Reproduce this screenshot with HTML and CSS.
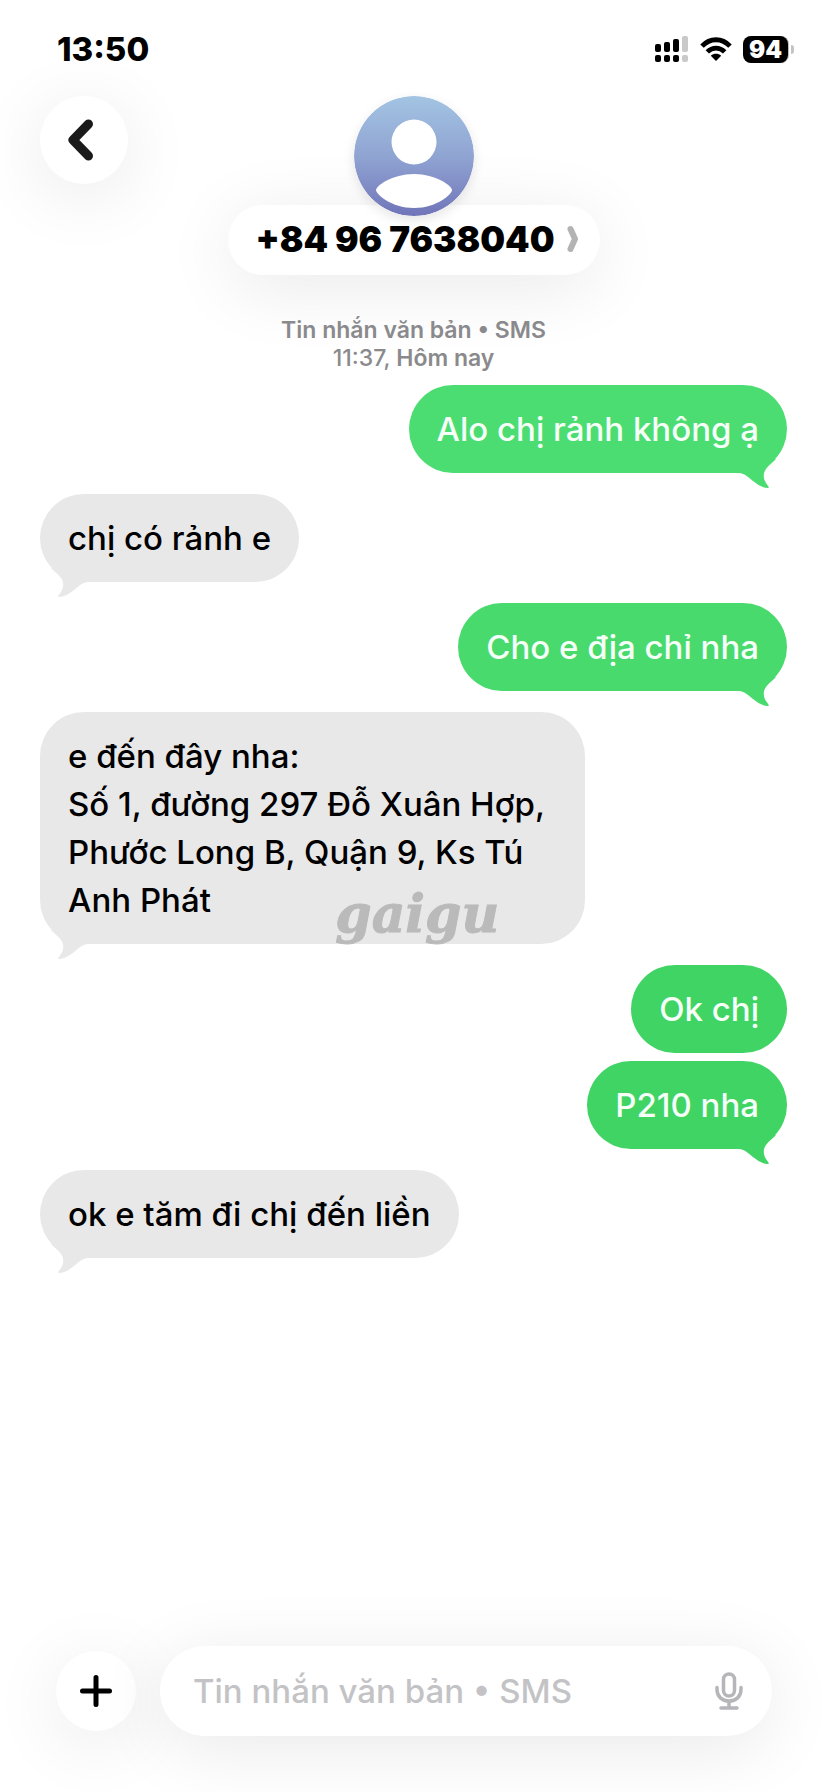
FILE: index.html
```html
<!DOCTYPE html>
<html lang="vi">
<head>
<meta charset="utf-8">
<meta name="viewport" content="width=device-width, initial-scale=1">
<title>Tin nhắn</title>
<link rel="stylesheet" href="styles.css">
</head>
<body>
<svg class="defs" width="0" height="0" aria-hidden="true">
  <symbol id="tail" viewBox="0 0 48 32">
    <path d="M0 16C5 16 9 20 14 24C19 28 24 31 29 31C31 31 29 29 27 26C24 21 24 16 27 12C30 8 33 6 37 2L20 0L0 10Z"/>
  </symbol>
</svg>
<div class="phone">
  <div class="status">
    <time class="clock">13:50</time>
    <div class="indicators">
      <svg width="34" height="28" viewBox="0 0 34 28" aria-hidden="true">
        <g fill="#000">
          <rect x="0" y="9" width="6" height="8" rx="2"/><rect x="9" y="7" width="6" height="10" rx="2"/><rect x="18" y="4" width="6" height="13" rx="2"/>
          <rect x="0" y="20" width="6" height="7" rx="2"/><rect x="9" y="20" width="6" height="7" rx="2"/><rect x="18" y="20" width="6" height="7" rx="2"/>
        </g>
        <g fill="#c9c9c9"><rect x="27" y="1" width="6" height="16" rx="2"/><rect x="27" y="20" width="6" height="7" rx="2"/></g>
      </svg>
      <svg width="32" height="26" viewBox="0 0 32 26" aria-hidden="true">
        <g fill="none" stroke="#000" stroke-width="4.800">
          <path d="M2 10.200C10 1.600 22 1.600 30 10.200"/><path d="M7.300 15.900C12.400 10.800 19.600 10.800 24.700 15.900"/>
        </g>
        <path d="M10.800 19.800C13.800 17.200 18.200 17.200 21.200 19.800L16 25Z"/>
      </svg>
      <div class="battery"><span class="level">94</span><span class="cap"></span></div>
    </div>
  </div>

  <header class="top">
    <button class="back" type="button" aria-label="Quay lại">
      <svg width="26" height="42" viewBox="0 0 26 42" aria-hidden="true"><path d="M20.500 5L5 21L20.500 37" fill="none" stroke="#1a1a1a" stroke-width="9" stroke-linecap="round" stroke-linejoin="round"/></svg>
    </button>
    <div class="contact">
      <svg class="avatar" width="120" height="120" viewBox="0 0 120 120" aria-hidden="true">
        <defs><linearGradient id="sky" x1="0" y1="0" x2="0" y2="1"><stop offset="0" stop-color="#a3c4e3"/><stop offset=".5" stop-color="#90a4d2"/><stop offset="1" stop-color="#7075b9"/></linearGradient></defs>
        <circle cx="60" cy="60" r="60" fill="url(#sky)"/>
        <circle cx="60" cy="46" r="22.500" fill="#fff"/>
        <path d="M22 94C22 90 38 78 60 78C82 78 98 90 98 94C98 98 83 112 60 112C37 112 22 98 22 94Z" fill="#fff"/>
      </svg>
      <button class="name" type="button">+84 96 7638040
        <svg width="12" height="28" viewBox="0 0 12 28" aria-hidden="true"><path d="M3.500 4L8 14L3.500 24" fill="none" stroke="#b3b3b3" stroke-width="6" stroke-linecap="round" stroke-linejoin="round"/></svg>
      </button>
    </div>
  </header>

  <main class="thread">
    <p class="meta"><b>Tin nhắn văn bản • SMS</b><br>11:37, <b>Hôm nay</b></p>
    <div class="msg out tone1">Alo chị rảnh không ạ<svg class="tail"><use href="#tail"/></svg></div>
    <div class="msg in">chị có rảnh e<svg class="tail"><use href="#tail"/></svg></div>
    <div class="msg out tone2">Cho e địa chỉ nha<svg class="tail"><use href="#tail"/></svg></div>
    <div class="msg in long">e đến đây nha:<br>Số 1, đường 297 Đỗ Xuân Hợp, Phước Long B, Quận 9, Ks Tú Anh Phát<svg class="tail"><use href="#tail"/></svg><span class="mark">gaigu</span></div>
    <div class="msg out tone3">Ok chị</div>
    <div class="msg out tone3 joined">P210 nha<svg class="tail"><use href="#tail"/></svg></div>
    <div class="msg in">ok e tăm đi chị đến liền<svg class="tail"><use href="#tail"/></svg></div>
  </main>

  <form class="composer">
    <button class="add" type="button" aria-label="Thêm">
      <svg width="32" height="32" viewBox="0 0 32 32" aria-hidden="true"><path d="M16 2.500V29.500M2.500 16H29.500" stroke="#000" stroke-width="5" stroke-linecap="round"/></svg>
    </button>
    <div class="field">
      <input class="text" type="text" aria-label="Tin nhắn" placeholder="Tin nhắn văn bản • SMS">
      <button class="mic" type="button" aria-label="Ghi âm">
        <svg width="28" height="38" viewBox="0 0 28 38" fill="none" stroke="#b5b5ba" stroke-width="3.500" stroke-linecap="round" aria-hidden="true"><rect x="8.500" y="2" width="11" height="22" rx="5.500"/><path d="M2 15.500V17.500C2 24.500 7 29 14 29S26 24.500 26 17.500V15.500M14 29V35.500M6 36H22"/></svg>
      </button>
    </div>
  </form>
</div>
</body>
</html>
```
FILE: styles.css
```css
* { box-sizing: border-box; }

body {
  margin: 0;
  background: #fff;
  color: #000;
  font-family: Inter, "Noto Sans", sans-serif;
}

button, input {
  margin: 0;
  padding: 0;
  border: 0;
  background: none;
  color: inherit;
  font: inherit;
}

svg { display: block; flex: none; }
.defs { position: absolute; }

.phone {
  display: flex;
  flex-direction: column;
  min-height: 100vh;
  overflow: hidden;
}

.status {
  display: flex;
  align-items: center;
  justify-content: space-between;
  padding: 29px 34px 27px 57px;
}

.clock { font-size: 33px; font-weight: 800; line-height: 40px; }

.indicators { display: flex; align-items: center; gap: 11px; }

.battery { display: flex; align-items: center; gap: 3px; }

.level {
  padding: 0 6px;
  border-radius: 8px;
  background: #000;
  box-shadow: 1px 0 0 #bbb;
  color: #fff;
  font-size: 24px;
  font-weight: 900;
  line-height: 27px;
}

.cap { width: 3px; height: 9px; border-radius: 0 4px 4px 0; background: #c4c4c4; }

.top {
  display: grid;
  grid-template-columns: 1fr auto 1fr;
  align-items: start;
  padding: 0 40px;
}

.back, .name, .add, .field { background: #fff; box-shadow: 0 12px 72px rgba(0, 0, 0, .09); }

.back, .add {
  display: grid;
  place-items: center;
  border-radius: 50%;
}

.back { width: 88px; height: 88px; padding-right: 6px; }

.contact { display: flex; flex-direction: column; align-items: center; }

.avatar { z-index: 1; border-radius: 50%; box-shadow: 0 4px 12px rgba(0, 0, 0, .1); }

.name {
  display: flex;
  align-items: center;
  gap: 12px;
  margin-top: -11px;
  padding: 14px 21px 16px 27px;
  border-radius: 35px;
  font-size: 35px;
  font-weight: 900;
  line-height: 40px;
}

.thread {
  display: flex;
  flex-direction: column;
  gap: 21px;
  padding: 41px 41px 60px 40px;
}

.meta {
  margin: 0 0 -8px;
  color: #8a8a8d;
  font-size: 23px;
  font-weight: 500;
  line-height: 28px;
  text-align: center;
}

.meta b { font-weight: 600; }

.msg {
  position: relative;
  max-width: 73%;
  padding: 20px 28px;
  border-radius: 44px;
  font-size: 33px;
  font-weight: 500;
  line-height: 48px;
}

.in { align-self: flex-start; background: #e8e8e8; }
.out { align-self: flex-end; color: #f6fff8; }
.tone1 { background: #4cdd72; fill: #4cdd72; }
.tone2 { background: #48da6d; fill: #48da6d; }
.tone3 { background: #3fd464; fill: #3fd464; }
.joined { margin-top: -13px; }

.tail { position: absolute; right: 0; bottom: -16px; width: 48px; height: 32px; }
.in .tail { right: auto; left: 0; fill: #e8e8e8; transform: scaleX(-1); }

.mark {
  position: absolute;
  right: 86px;
  bottom: -2px;
  color: #bababa;
  font: italic 700 52px/64px "DejaVu Serif", serif;
  -webkit-text-stroke: 1px #bababa;
}

.composer {
  display: flex;
  align-items: center;
  gap: 24px;
  margin-top: auto;
  padding: 0 56px 56px;
}

.add { width: 80px; height: 80px; }

.field {
  display: flex;
  flex: 1;
  align-items: center;
  gap: 16px;
  min-width: 0;
  padding: 21px 29px 21px 33px;
  border-radius: 45px;
}

.text { flex: 1; min-width: 0; height: 48px; outline: 0; font-size: 33px; font-weight: 500; }
.text::placeholder { color: #c3c3c6; opacity: 1; }
```
